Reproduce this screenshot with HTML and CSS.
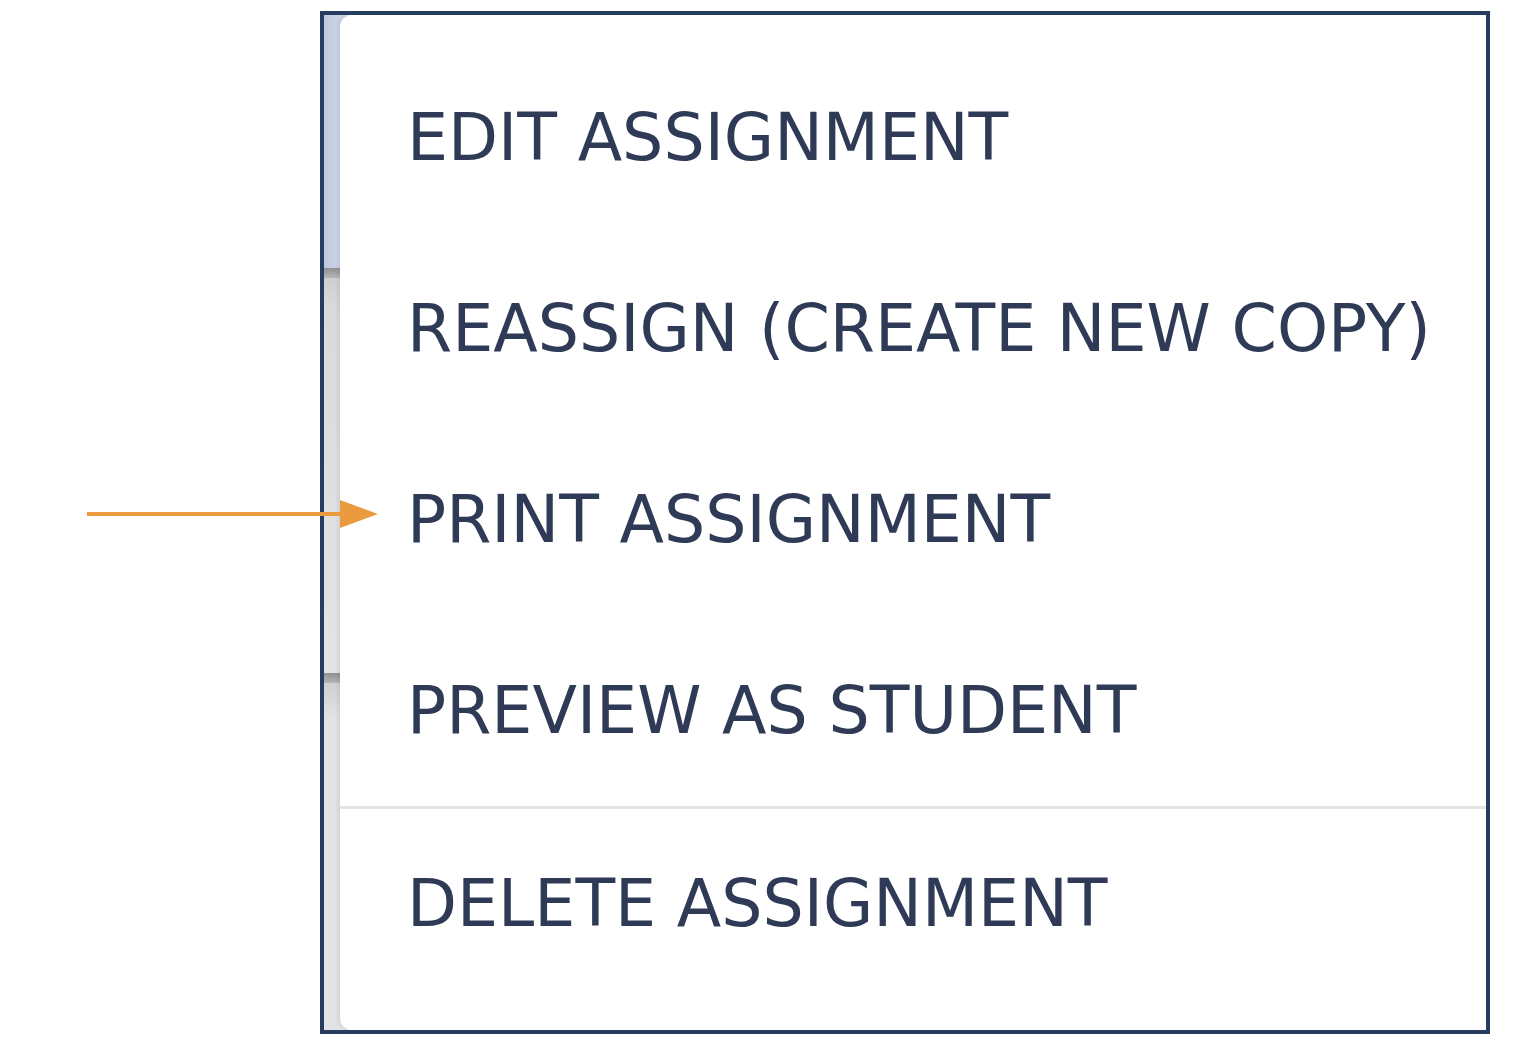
FILE: index.html
```html
<!DOCTYPE html>
<html lang="en">

<head>
    <meta charset="UTF-8">
    <meta name="viewport" content="width=device-width, initial-scale=1.0">
    <title>Assignment Menu</title>
    <link rel="stylesheet" href="styles.css">
</head>

<body>
    <div class="frame">
        <div class="backdrop">
            <div class="backdrop-top"></div>
            <div class="backdrop-bar"></div>
            <div class="backdrop-mid"></div>
            <div class="backdrop-bar"></div>
            <div class="backdrop-rest"></div>
        </div>
        <ul class="menu">
            <li class="menu-item">EDIT ASSIGNMENT</li>
            <li class="menu-item">REASSIGN (CREATE NEW COPY)</li>
            <li class="menu-item">PRINT ASSIGNMENT</li>
            <li class="menu-item">PREVIEW AS STUDENT</li>
            <li class="menu-item divided">DELETE ASSIGNMENT</li>
        </ul>
    </div>

    <!-- annotation arrow pointing at the print option -->
    <svg class="arrow" width="400" height="40" viewBox="0 0 400 40">
        <line x1="87" y1="20" x2="346" y2="20" stroke="#e99b3d" stroke-width="4" />
        <polygon points="340,6 378,20 340,34" fill="#e99b3d" />
    </svg>
</body>

</html>
```

FILE: styles.css
```css
body {
    margin: 0;
    background: #fff;
    font-family: "DejaVu Sans", Arial, sans-serif;
}

.frame {
    display: flex;
    width: 1162px;
    height: 1015px;
    margin: 11px 0 0 320px;
    border: 4px solid #263d5f;
    overflow: hidden;
}

.backdrop {
    display: flex;
    flex-direction: column;
    width: 24px;
    flex-shrink: 0;
}

.backdrop-top {
    height: 253px;
    background: linear-gradient(to right, #c0c8de, #d5dbea);
}

.backdrop-bar {
    height: 10px;
    background: linear-gradient(#8f9193, #b4b6b8);
}

.backdrop-mid {
    height: 395px;
    background: linear-gradient(#cdcfd1 0, #d9dadb 30px, #e3e4e5 100%);
}

.backdrop-rest {
    flex: 1;
    background: linear-gradient(#cfd0d2 0, #e2e3e4 35px);
}

.menu {
    flex: 1;
    margin: 0 0 0 -8px;
    padding: 27px 0 0;
    list-style: none;
    background: #fff;
    border-radius: 12px 0 0 12px;
    box-shadow: -2px 0 4px rgba(0, 0, 0, 0.08);
}

.menu-item {
    display: flex;
    align-items: center;
    height: 191px;
    padding-left: 67px;
    font-size: 65px;
    color: #2e3a56;
    white-space: nowrap;
}

.menu-item.divided {
    border-top: 3px solid #e4e4e4;
    height: 189px;
}

.arrow {
    position: absolute;
    top: 494px;
    left: 0;
}
```
